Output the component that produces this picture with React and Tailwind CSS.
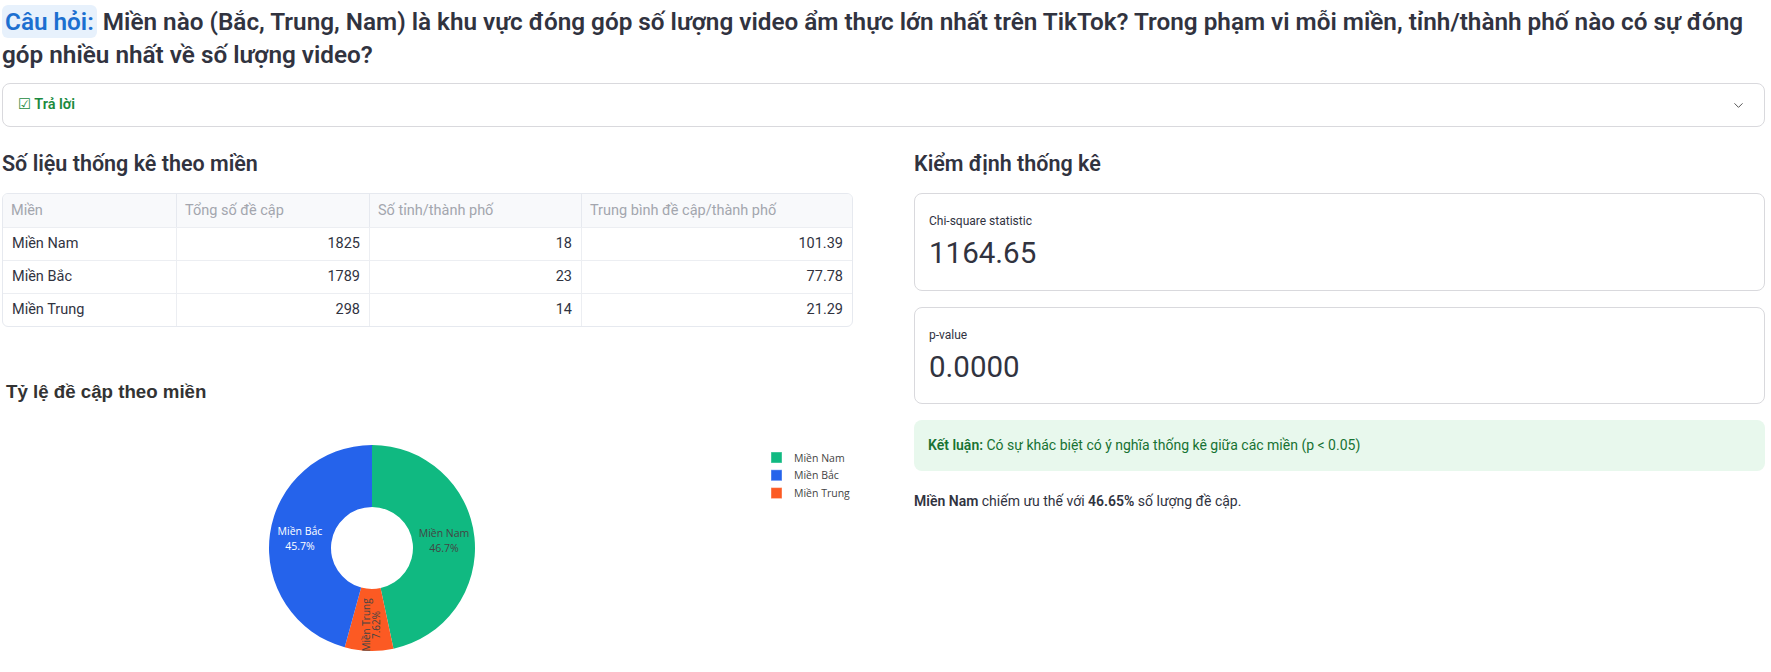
import React from 'react';
import { ChevronDown } from 'lucide-react';

const rows = [
  { mien: 'Miền Nam', tong: 1825, so: 18, tb: '101.39' },
  { mien: 'Miền Bắc', tong: 1789, so: 23, tb: '77.78' },
  { mien: 'Miền Trung', tong: 298, so: 14, tb: '21.29' },
];

const slices = [
  { name: 'Miền Nam', value: 1825, color: '#10b981' },
  { name: 'Miền Trung', value: 298, color: '#fc5a23' },
  { name: 'Miền Bắc', value: 1789, color: '#2563eb' },
];

const legend = [
  { name: 'Miền Nam', color: '#10b981' },
  { name: 'Miền Bắc', color: '#2563eb' },
  { name: 'Miền Trung', color: '#fc5a23' },
];

const pt = (cx, cy, r, deg) => {
  const a = (deg * Math.PI) / 180;
  return [cx + r * Math.sin(a), cy - r * Math.cos(a)];
};

const arc = (cx, cy, ro, ri, a0, a1) => {
  const large = a1 - a0 > 180 ? 1 : 0;
  const [x0, y0] = pt(cx, cy, ro, a0);
  const [x1, y1] = pt(cx, cy, ro, a1);
  const [x2, y2] = pt(cx, cy, ri, a1);
  const [x3, y3] = pt(cx, cy, ri, a0);
  return `M${x0} ${y0} A${ro} ${ro} 0 ${large} 1 ${x1} ${y1} L${x2} ${y2} A${ri} ${ri} 0 ${large} 0 ${x3} ${y3} Z`;
};

const DonutChart = () => {
  const total = slices.reduce((s, d) => s + d.value, 0);
  const cx = 370;
  const cy = 185;
  let start = 0;
  const paths = slices.map((s) => {
    const end = start + (s.value / total) * 360;
    const p = { ...s, d: arc(cx, cy, 103, 41, start, end) };
    start = end;
    return p;
  });

  return (
    <svg width="851" height="312" className="block" style={{ fontFamily: '"Open Sans", Arial, sans-serif' }}>
      <text x="4" y="35" fontSize="18.7" fontWeight="700" fill="#333" style={{ fontFamily: '"Liberation Sans", Arial, sans-serif' }}>
        Tỷ lệ đề cập theo miền
      </text>
      {paths.map((p) => (
        <path key={p.name} d={p.d} fill={p.color} />
      ))}
      <text x="442" y="174" fontSize="10.5" fill="#444" textAnchor="middle">Miền Nam</text>
      <text x="442" y="189" fontSize="10.5" fill="#444" textAnchor="middle">46.7%</text>
      <text x="298" y="172" fontSize="10.5" fill="#fff" textAnchor="middle">Miền Bắc</text>
      <text x="298" y="187" fontSize="10.5" fill="#fff" textAnchor="middle">45.7%</text>
      <g transform="translate(369 262) rotate(-90)">
        <text x="0" y="-1.5" fontSize="10" fill="#444" textAnchor="middle">Miền Trung</text>
        <text x="0" y="8.5" fontSize="10" fill="#444" textAnchor="middle">7.62%</text>
      </g>
      {legend.map((l, i) => (
        <g key={l.name}>
          <rect x="769" y={89 + i * 17.8} width="11" height="11" fill={l.color} stroke="#fff" strokeOpacity="0.4" />
          <text x="792" y={98.5 + i * 17.8} fontSize="10.5" fill="#444">{l.name}</text>
        </g>
      ))}
    </svg>
  );
};

const App = () => {
  return (
    <div className="min-h-screen bg-white pl-[2px] pr-[6px] text-[#31333F]" style={{ fontFamily: 'Roboto, "Noto Sans", sans-serif' }}>
      <h3 className="pt-[5px] text-[24.3px] font-semibold leading-[33px]">
        <span className="rounded-md bg-[#e7f1fc] px-[3px] py-[2px] text-[#1c6fd0]">Câu hỏi:</span>{' '}
        Miền nào (Bắc, Trung, Nam) là khu vực đóng góp số lượng video ẩm thực lớn nhất trên TikTok? Trong phạm vi mỗi miền, tỉnh/thành phố nào có sự đóng góp nhiều nhất về số lượng video?
      </h3>

      <div className="mt-[12px] flex h-[44px] items-center justify-between rounded-lg border border-[#d9d9dd] pl-[15px] pr-[18px]">
        <span className="text-[14.5px] font-semibold text-[#1a8a3e]">
          <span style={{ fontFamily: '"DejaVu Sans", sans-serif' }}>☑</span> Trả lời
        </span>
        <ChevronDown size={15} strokeWidth={1.6} className="text-[#555]" />
      </div>

      <div className="mt-[22px] grid grid-cols-2 gap-[61px]">
        <div>
          <h4 className="text-[21.5px] font-semibold leading-[30px]">Số liệu thống kê theo miền</h4>
          <div className="mt-[14px] overflow-hidden rounded-md border border-[#e6e9ef] text-[14.5px]">
            <div className="grid h-[33px] grid-cols-[174px_193px_212px_1fr] items-center bg-[#f8f9fb] text-[#a3a6ae]">
              <div className="h-full border-r border-[#e6e9ef] px-[8px] leading-[33px]">Miền</div>
              <div className="h-full border-r border-[#e6e9ef] px-[8px] leading-[33px]">Tổng số đề cập</div>
              <div className="h-full border-r border-[#e6e9ef] px-[8px] leading-[33px]">Số tỉnh/thành phố</div>
              <div className="h-full px-[8px] leading-[33px]">Trung bình đề cập/thành phố</div>
            </div>
            {rows.map((r) => (
              <div key={r.mien} className="grid h-[33px] grid-cols-[174px_193px_212px_1fr] border-t border-[#eceef2]">
                <div className="border-r border-[#eceef2] px-[9px] leading-[32px]">{r.mien}</div>
                <div className="border-r border-[#eceef2] px-[9px] text-right leading-[32px]">{r.tong}</div>
                <div className="border-r border-[#eceef2] px-[9px] text-right leading-[32px]">{r.so}</div>
                <div className="px-[9px] text-right leading-[32px]">{r.tb}</div>
              </div>
            ))}
          </div>
          <div className="mt-[36px]">
            <DonutChart />
          </div>
        </div>

        <div>
          <h4 className="text-[21.5px] font-semibold leading-[30px]">Kiểm định thống kê</h4>
          <div className="mt-[14px] flex h-[98px] flex-col justify-center rounded-lg border border-[#d9d9dd] px-[14px]">
            <div className="text-[12px]">Chi-square statistic</div>
            <div className="mt-[4px] text-[29.5px] leading-[38px]">1164.65</div>
          </div>
          <div className="mt-[16px] flex h-[97px] flex-col justify-center rounded-lg border border-[#d9d9dd] px-[14px]">
            <div className="text-[12px]">p-value</div>
            <div className="mt-[4px] text-[29.5px] leading-[38px]">0.0000</div>
          </div>
          <div className="mt-[16px] flex h-[51px] items-center rounded-lg bg-[#e8f8ed] px-[14px] text-[14px] text-[#177233]">
            <span><span className="font-semibold">Kết luận:</span> Có sự khác biệt có ý nghĩa thống kê giữa các miền (p &lt; 0.05)</span>
          </div>
          <p className="mt-[20px] text-[14px]">
            <span className="font-semibold">Miền Nam</span> chiếm ưu thế với <span className="font-semibold">46.65%</span> số lượng đề cập.
          </p>
        </div>
      </div>
    </div>
  );
};

export default App;
